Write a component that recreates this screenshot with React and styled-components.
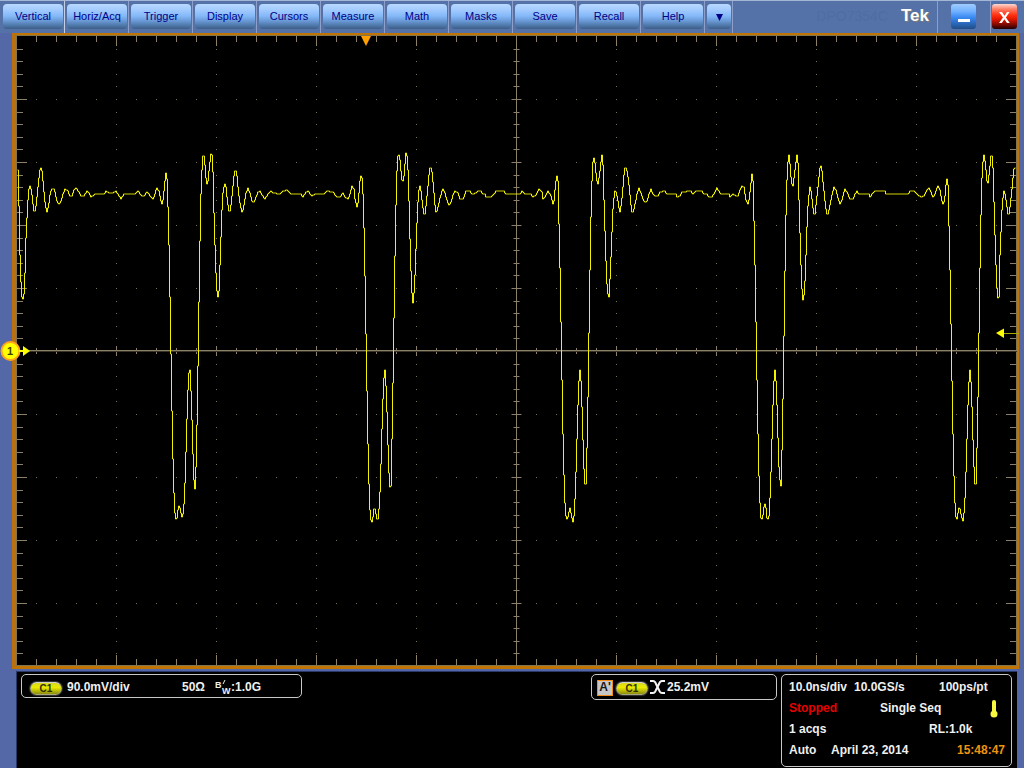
import React from 'react';
import styled, { createGlobalStyle } from 'styled-components';

const MENU = ['Vertical', 'Horiz/Acq', 'Trigger', 'Display', 'Cursors', 'Measure', 'Math', 'Masks', 'Save', 'Recall', 'Help'];

// graticule: 10 x 10 divisions, 5 minor ticks per division
const PLOT_W = 1001;
const PLOT_H = 631;
const DIV_X = 100;
const DIV_Y = 63;
const MID_X = 500;
const MID_Y = 316;

// channel 1 record, "column,level" pairs
const RECORD = `
1,170 2,206 3,255 4,282 5,297 6,299 7,294 8,273 9,238 10,218 11,200 12,189 13,186 14,189 15,195 16,204 17,211 18,211 19,206
20,197 21,187 22,178 23,170 24,168 25,171 26,181 27,192 28,202 29,208 30,212 31,208 32,203 33,195 34,191 35,189 37,189 38,192
39,197 40,201 42,204 44,201 46,194 48,189 51,191 53,196 55,196 57,190 59,188 62,192 64,196 67,196 70,191 72,193 74,197 77,195
78,194 87,194 89,191 92,193 96,193 99,191 101,194 104,199 107,194 118,194 121,191 125,196 127,196 130,192 132,194 134,197 136,199
137,197 139,190 140,188 142,191 144,201 145,204 146,200 147,191 148,181 149,173 150,179 151,207 152,245 153,297 154,354 155,411
156,459 157,493 158,513 159,519 160,518 161,510 162,506 163,508 164,513 165,517 166,514 167,504 168,483 169,452 170,419 171,390
172,373 173,370 174,391 175,420 176,454 177,480 178,489 179,467 180,425 181,366 182,302 183,241 184,194 185,170 186,156 187,156
188,165 189,178 190,184 191,181 192,171 193,162 194,154 195,155 196,172 197,213 198,245 199,273 200,291 201,297 202,291 203,265
204,237 205,210 206,193 207,187 208,184 209,187 210,197 211,205 212,211 213,211 214,205 215,196 216,186 217,176 218,171 219,171
220,176 221,187 222,196 223,203 224,208 225,212 226,210 228,199 229,193 231,188 233,193 235,201 237,202 239,197 241,192 243,191
245,195 248,199 251,194 254,191 256,193 263,194 266,191 270,190 274,194 284,194 286,197 289,192 291,191 295,196 298,194 307,194
310,191 316,192 320,197 323,197 326,193 328,197 331,199 333,194 335,186 337,189 338,199 340,207 341,203 342,193 343,181 344,176
345,178 346,194 347,228 348,276 349,334 350,391 351,444 352,484 353,510 354,520 355,522 356,517 357,509 358,509 359,514 360,519
361,519 362,509 363,492 364,464 365,429 366,399 367,378 368,370 369,386 370,412 371,445 372,473 373,487 374,486 375,439 376,383
377,318 378,256 379,205 380,171 381,156 382,155 383,160 384,171 385,180 386,181 387,176 388,164 389,153 390,156 391,170 392,201
393,239 394,271 395,293 396,303 397,293 398,275 399,249 400,223 401,202 402,190 403,186 404,191 405,200 406,208 407,214 408,214
409,206 410,196 411,186 412,175 413,168 414,168 415,172 416,182 417,193 418,205 419,212 420,211 422,203 423,198 425,191 426,189
428,193 430,200 432,205 434,202 436,195 438,191 441,193 443,199 446,199 448,194 449,191 453,191 455,194 459,193 461,191 464,191
466,194 468,194 469,197 474,197 477,194 479,191 487,191 489,194 503,194 505,191 508,194 514,194 516,197 519,195 522,189 525,192
526,199 528,197 531,191 534,196 536,204 537,201 538,190 539,181 540,176 541,181 542,224 543,268 544,322 545,380 546,434 547,475
548,503 549,516 550,519 551,517 552,512 553,508 554,513 555,518 556,522 557,516 558,499 559,472 560,439 561,405 562,381 563,370
564,381 565,407 566,440 567,469 568,484 569,484 570,448 571,397 572,333 573,270 574,217 575,181 576,162 577,158 578,163 579,173
580,181 581,184 582,178 583,171 584,162 585,155 586,165 587,200 588,231 589,261 590,284 591,294 592,297 593,279 594,257 595,232
596,209 597,198 598,191 599,192 600,196 601,201 602,208 603,212 604,206 605,198 606,187 607,175 608,168 609,168 610,171 611,177
612,185 613,195 614,205 615,212 616,212 617,209 618,204 619,200 620,194 622,188 624,193 626,199 628,202 630,201 632,194 634,189
636,194 638,196 641,196 643,192 648,191 650,194 659,194 660,197 663,196 665,192 674,191 676,194 679,191 685,191 687,194 690,194
692,197 695,197 698,192 700,188 702,191 704,194 712,194 713,197 716,194 719,196 721,196 723,190 725,186 727,187 729,200 731,204
732,200 733,192 734,183 735,174 736,181 737,221 738,265 739,322 740,380 741,434 742,476 743,503 744,518 745,519 746,515 747,507
748,504 749,508 750,518 751,519 752,516 753,498 754,472 755,439 756,405 757,381 758,370 759,381 760,405 761,438 762,467 763,480
764,486 765,450 766,399 767,336 768,271 769,215 770,180 771,162 772,155 773,164 774,177 775,184 776,186 777,178 778,170 779,162
780,155 781,163 782,200 783,233 784,265 785,289 786,300 787,295 788,281 789,255 790,227 791,206 792,195 793,187 794,191 795,199
796,208 797,214 798,214 799,205 800,196 801,187 802,177 803,168 804,166 805,171 806,182 807,191 808,201 809,209 810,214 811,214
812,210 813,205 815,195 817,187 819,190 821,198 823,204 825,200 827,192 828,189 831,194 833,199 836,199 838,194 840,191 842,194
852,194 853,197 855,194 858,191 868,191 869,194 891,194 893,191 897,191 900,194 904,197 907,196 910,190 912,188 914,192 916,197
918,194 920,188 921,186 923,190 925,201 926,204 927,202 928,196 929,185 930,179 931,185 932,226 933,270 934,324 935,381 936,434
937,476 938,503 939,517 940,519 941,513 942,508 943,509 944,514 945,518 946,521 947,513 948,498 949,472 950,439 951,405 952,382
953,370 954,382 955,407 956,440 957,467 958,484 959,484 960,448 961,397 962,333 963,268 964,215 965,178 966,162 967,155 968,161
969,170 970,181 971,183 972,175 973,166 974,156 975,156 976,168 977,202 978,235 979,265 980,288 981,298 982,297 983,255 984,232
985,210 986,198 987,191 988,194 989,200 990,207 991,214 992,214 993,207 994,198 995,189 996,178 997,169 998,168 999,168
`;

// one vertical stroke per sample column, like the instrument's raster
const buildTrace = () => {
    const points = RECORD.trim().split(/\s+/).map((pair) => pair.split(',').map(Number));
    let path = `M${points[0][0] + 0.5} ${points[0][1] - 35}`;

    for (let i = 1; i < points.length; i++) {
        const [x0, y0] = points[i - 1];
        const [x1, y1] = points[i];
        for (let x = x0 + 1; x <= x1; x++) {
            const y = Math.round(y0 + ((y1 - y0) * (x - x0)) / (x1 - x0));
            path += `H${x + 0.5}V${y - 35}`;
        }
    }

    return path;
};

const buildTicks = () => {
    let path = '';
    for (let i = 1; i < 50; i++) {
        const major = i % 5 === 0;
        const x = i * (DIV_X / 5) + 0.5;
        const y = Math.round(MID_Y + (i - 25) * (DIV_Y / 5)) + 0.5;
        const edge = major ? 10 : 6;
        const half = major ? 5 : 3;

        path += `M${x} 1v${edge}M${x} ${PLOT_H - 1}v-${edge}M${x} ${MID_Y - half}v${half * 2}`;
        path += `M1 ${y}h${edge}M${PLOT_W - 1} ${y}h-${edge}M${MID_X + 0.5 - half} ${y}h${half * 2}`;
    }
    return path;
};

const buildDots = () => {
    let path = '';
    for (let major = 1; major < 10; major++) {
        for (let minor = 1; minor < 50; minor++) {
            path += `M${minor * (DIV_X / 5)} ${MID_Y + (major - 5) * DIV_Y + 0.5}h1`;
            path += `M${major * DIV_X} ${Math.round(MID_Y + (minor - 25) * (DIV_Y / 5)) + 0.5}h1`;
        }
    }
    return path;
};

const TRACE = buildTrace();
const TICKS = buildTicks();
const DOTS = buildDots();

const GlobalStyle = createGlobalStyle`
    * {
        box-sizing: border-box;
    }

    body {
        margin: 0;
        background: #5468a8;
        font-family: "Liberation Sans", Arial, sans-serif;
    }
`;

const Scope = styled.div`
    height: 100vh;
    min-height: 480px;
    display: flex;
    flex-direction: column;
    overflow: hidden;
`;

const Toolbar = styled.header`
    display: flex;
    align-items: stretch;
    height: 33px;
    flex: none;
    padding: 0 7px 0 1px;
    border-top: 1px solid #a4b6d6;
    background: #5472a8;
`;

const Menu = styled.nav`
    display: flex;
`;

const Slot = styled.div`
    display: flex;
    align-items: flex-start;
    padding: 3px 1px 0 2px;
    border-right: 1px solid #8ea0ca;

    &:first-child {
        border-right-color: #c4cee4;
    }
`;

const MenuButton = styled.button`
    width: ${({ $narrow }) => ($narrow ? 24 : 60)}px;
    height: 25px;
    padding: 0;
    border: 0;
    border-radius: 4px;
    background: linear-gradient(#b8d8ff 0%, #a4ccff 22%, #84b8f8 48%, #6c9cd8 66%, #4c74a4 88%, #3c5c84 100%);
    color: #000088;
    font: 11px/25px "Liberation Sans", Arial, sans-serif;
    text-align: center;
`;

const Brand = styled.div`
    display: flex;
    align-items: flex-start;
    gap: 13px;
    margin-left: auto;
    padding: 5px 8px 0 0;
    border-right: 1px solid #8ea0ca;
`;

const Model = styled.span`
    color: #4f6da4;
    font-size: 14px;
    line-height: 20px;
`;

const Logo = styled.span`
    color: #fff;
    font-size: 17px;
    font-weight: bold;
    line-height: 20px;
    text-shadow: 1px 1px 1px #8c7c6c;
`;

const WindowSlot = styled.div`
    display: flex;
    padding: 3px 14px 0 13px;
    border-right: 1px solid #8ea0ca;

    &:last-child {
        padding: 3px 0 0 1px;
        border: 0;
    }
`;

const WindowButton = styled.button`
    display: flex;
    width: 25px;
    height: 25px;
    padding: 0;
    border: 0;
    border-radius: 3px;
    background: ${({ $close }) => ($close
        ? 'linear-gradient(#ffd8d0 0%, #ff8068 20%, #ff3010 45%, #e41800 60%, #700800 85%, #200000 100%)'
        : 'linear-gradient(#a0ccff 0%, #70b0ff 30%, #3c8cf4 52%, #2c6cc4 75%, #204c84 100%)')};
`;

const PlotFrame = styled.main`
    position: relative;
    display: flex;
    flex: 1;
    min-height: 0;
    margin: 0 5px 2px 12px;
    border: solid #c07404;
    border-width: 2px 2px 3px 4px;
    border-left-color: #b87010;
    background: #000;
`;

const Plot = styled.svg`
    display: block;
    width: 100%;
    height: 100%;
    overflow: visible;
`;

const ChannelMarker = styled.svg`
    position: absolute;
    top: 50%;
    left: -16px;
    margin-top: -10px;
    width: 32px;
    height: 20px;
`;

const Readouts = styled.footer`
    display: flex;
    align-items: flex-start;
    flex: none;
    gap: 4px;
    margin: 0 7px 0 16px;
    padding: 2px 5px 1px 4px;
    border-top: 1px solid #283868;
    border-left: 1px solid #283868;
    background: #000;
    color: #f0f0f0;
    font-size: 12px;
    font-weight: bold;
    line-height: 21px;
    white-space: nowrap;
`;

const Panel = styled.section`
    border: 1px solid #c8c8c8;
    border-radius: 5px;
`;

const ChannelPanel = styled(Panel)`
    display: flex;
    align-items: center;
    width: 281px;
    height: 24px;
    margin-right: auto;
    padding: 2px 7px 0;
`;

const TriggerPanel = styled(Panel)`
    display: flex;
    align-items: center;
    gap: 2px;
    width: 186px;
    height: 26px;
    padding: 0 5px;
`;

const TimePanel = styled(Panel)`
    width: 231px;
    height: 93px;
    padding: 2px 6px 0 7px;
`;

const Line = styled.div`
    display: flex;
    align-items: center;
    height: 21px;
`;

const Cell = styled.span`
    flex: none;
    width: ${({ $width }) => ($width ? `${$width}px` : 'auto')};
    margin-left: ${({ $end }) => ($end ? 'auto' : 0)};
    color: ${({ $color }) => $color || 'inherit'};
`;

const Badge = styled.span`
    flex: none;
    width: 32px;
    height: 13px;
    margin: 2px 5px 0 1px;
    border: 1px solid #a8a878;
    border-top-color: #d0d0d0;
    border-radius: 7px;
    background: linear-gradient(#d8d820, #ecec00 40%, #8c8c10);
    box-shadow: 0 0 1px 1px #383838;
    color: #303000;
    font-size: 10px;
    line-height: 12px;
    text-align: center;
`;

const TriggerBadge = styled(Badge)`
    margin: 2px 0 0 1px;
`;

const EventTag = styled.span`
    width: 16px;
    height: 16px;
    margin-top: 2px;
    border: 1px solid #f08c18;
    background: #c8c8c8;
    color: #181818;
    font-size: 12px;
    line-height: 13px;
    text-align: center;
`;

const Bandwidth = styled.span`
    display: flex;
    align-items: center;

    svg {
        width: 16px;
        height: 18px;
    }
`;

const MinimizeIcon = () => (
    <svg width="25" height="25" viewBox="0 0 25 25" aria-hidden="true">
        <rect x="7" y="15" width="12" height="3" fill="#fff" />
    </svg>
);

const CloseIcon = () => (
    <svg width="25" height="25" viewBox="0 0 25 25" aria-hidden="true">
        <path d="M7 8H10L12.5 11.7L15 8H17.6L13.9 13.4L17.8 19H15L12.4 15.2L9.8 19H7L11 13.4Z" fill="#fff" />
    </svg>
);

const DropIcon = () => (
    <svg width="24" height="25" viewBox="0 0 24 25" aria-hidden="true">
        <path d="M9 10H16L12.5 17Z" fill="#000088" />
    </svg>
);

// crossing rising and falling edges
const EdgeIcon = () => (
    <svg width="15" height="14" viewBox="0 0 15 14" aria-label="either edge">
        <path d="M0 1H3Q5 1 6 4L9 10Q10 13 12 13H15M0 13H3Q5 13 6 10L9 4Q10 1 12 1H15" fill="none" stroke="#f4f4f4" strokeWidth="2" />
    </svg>
);

const ThermometerIcon = () => (
    <svg width="8" height="18" viewBox="0 0 8 18" aria-label="temperature">
        <rect x="2" y="0" width="4" height="14" rx="2" fill="#f8f840" />
        <circle cx="4" cy="14" r="3.5" fill="#f8f840" />
    </svg>
);

const Waveform = () => (
    <Plot viewBox={`0 0 ${PLOT_W} ${PLOT_H}`} preserveAspectRatio="none" role="img" aria-label="Channel 1 waveform">
        <path d={DOTS} stroke="#787058" />
        <path d={`M0 0.5H${PLOT_W}M0 ${PLOT_H - 0.5}H${PLOT_W}M0.5 0V${PLOT_H}M${PLOT_W - 0.5} 0V${PLOT_H}`} stroke="#84744c" />
        <path d={TICKS} stroke="#8c8068" />
        <path d={`M0 ${MID_Y - 0.5}H${PLOT_W}M${MID_X + 0.5} 0V${PLOT_H}`} stroke="#8c8068" />
        <path d={`M0 ${MID_Y + 0.5}H${PLOT_W}`} stroke="#383428" />
        <path d={TRACE} fill="none" stroke="#f0f000" />
        <path d="M345 1H355L350 11Z" fill="#ffa000" />
        <path d="M988 298.5H1003" stroke="#a8a800" />
        <path d="M980 298L988 293.5V303Z" fill="#ffff00" />
    </Plot>
);

const App = () => (
    <>
        <GlobalStyle />
        <Scope>
            <Toolbar>
                <Menu>
                    {MENU.map((label) => (
                        <Slot key={label}>
                            <MenuButton type="button">{label}</MenuButton>
                        </Slot>
                    ))}
                    <Slot>
                        <MenuButton type="button" $narrow aria-label="More menus"><DropIcon /></MenuButton>
                    </Slot>
                </Menu>
                <Brand>
                    <Model>DPO7354C</Model>
                    <Logo>Tek</Logo>
                </Brand>
                <WindowSlot>
                    <WindowButton type="button" aria-label="Minimize"><MinimizeIcon /></WindowButton>
                </WindowSlot>
                <WindowSlot>
                    <WindowButton type="button" $close aria-label="Close"><CloseIcon /></WindowButton>
                </WindowSlot>
            </Toolbar>

            <PlotFrame>
                <Waveform />
                <ChannelMarker viewBox="0 0 32 20" aria-label="Channel 1 position">
                    <circle cx="10.5" cy="10" r="9" fill="#ffff00" stroke="#ffa418" strokeWidth="2" />
                    <path d="M19 10H24" stroke="#ffff00" strokeWidth="2" />
                    <path d="M23 5L30 10L23 15Z" fill="#ffff00" />
                    <text x="10" y="14" textAnchor="middle" fontSize="11" fontWeight="bold" fill="#404000">1</text>
                </ChannelMarker>
            </PlotFrame>

            <Readouts>
                <ChannelPanel>
                    <Badge>C1</Badge>
                    <Cell $width={115}>90.0mV/div</Cell>
                    <Cell $width={33}>50Ω</Cell>
                    <Bandwidth>
                        <svg viewBox="0 0 16 18" aria-label="bandwidth">
                            <text x="0" y="10" fontSize="9" fill="#f0f0f0">B</text>
                            <text x="7" y="16" fontSize="9" fill="#f0f0f0">W</text>
                            <path d="M10 2L8 6" stroke="#f0f0f0" />
                        </svg>
                        :1.0G
                    </Bandwidth>
                </ChannelPanel>

                <TriggerPanel>
                    <EventTag>A'</EventTag>
                    <TriggerBadge>C1</TriggerBadge>
                    <EdgeIcon />
                    <Cell>25.2mV</Cell>
                </TriggerPanel>

                <TimePanel>
                    <Line>
                        <Cell $width={65}>10.0ns/div</Cell>
                        <Cell $width={85}>10.0GS/s</Cell>
                        <Cell>100ps/pt</Cell>
                    </Line>
                    <Line>
                        <Cell $width={91} $color="#e80000">Stopped</Cell>
                        <Cell $width={110}>Single Seq</Cell>
                        <ThermometerIcon />
                    </Line>
                    <Line>
                        <Cell $width={140}>1 acqs</Cell>
                        <Cell>RL:1.0k</Cell>
                    </Line>
                    <Line>
                        <Cell $width={42}>Auto</Cell>
                        <Cell>April 23, 2014</Cell>
                        <Cell $end $color="#ec9410">15:48:47</Cell>
                    </Line>
                </TimePanel>
            </Readouts>
        </Scope>
    </>
);

export default App;
